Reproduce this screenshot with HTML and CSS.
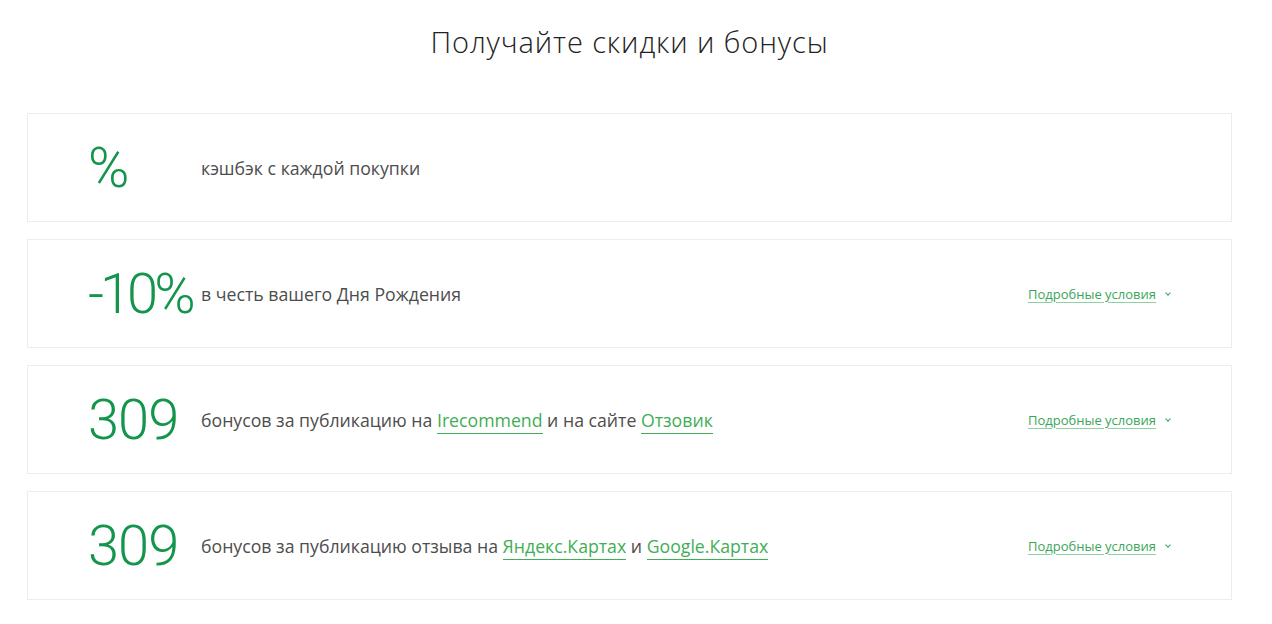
FILE: index.html
```html
<!DOCTYPE html>
<html lang="ru">
<head>
<meta charset="utf-8">
<title>Получайте скидки и бонусы</title>
<link rel="stylesheet" href="styles.css">
</head>
<body>
<section class="bonuses">
  <h1 class="title">Получайте скидки и бонусы</h1>
  <div class="list">
    <div class="card">
      <div class="value">%</div>
      <div class="desc">кэшбэк с каждой покупки</div>
    </div>
    <div class="card">
      <div class="value value-tight">-10%</div>
      <div class="desc">в честь вашего Дня Рождения</div>
      <a class="more" href="#">Подробные условия</a>
    </div>
    <div class="card">
      <div class="value">309</div>
      <div class="desc">бонусов за публикацию на <a class="ref" href="#">Irecommend</a> и на сайте <a class="ref" href="#">Отзовик</a></div>
      <a class="more" href="#">Подробные условия</a>
    </div>
    <div class="card">
      <div class="value">309</div>
      <div class="desc">бонусов за публикацию отзыва на <a class="ref" href="#">Яндекс.Картах</a> и <a class="ref" href="#">Google.Картах</a></div>
      <a class="more" href="#">Подробные условия</a>
    </div>
  </div>
</section>
</body>
</html>
```

FILE: styles.css
```css
html, body {
  margin: 0;
  padding: 0;
  background: #fff;
}
body {
  font-family: "Open Sans", "Liberation Sans", sans-serif;
  color: #444;
}
.bonuses {
  margin: 0 40px 0 27px;
}
.title {
  margin: 0;
  padding-top: 23px;
  height: 113px;
  box-sizing: border-box;
  text-align: center;
  font-weight: 300;
  font-size: 29px;
  line-height: 38px;
  letter-spacing: 0.9px;
  color: #222;
}
.list {
  display: flex;
  flex-direction: column;
  gap: 17px;
}
.card {
  height: 109px;
  box-sizing: border-box;
  border: 1px solid #ededed;
  display: flex;
  align-items: center;
  padding: 0 61px 0 60px;
}
.value {
  width: 113px;
  flex: none;
  font-family: Roboto, "Open Sans", sans-serif;
  font-weight: 300;
  font-size: 56px;
  line-height: 60px;
  color: #14954c;
  letter-spacing: -1px;
  white-space: nowrap;
}
.value-tight {
  letter-spacing: -4px;
}
.desc {
  flex: 1;
  font-size: 17.7px;
  font-weight: 400;
  color: #4d4d4d;
}
.ref {
  color: #3fae55;
  text-decoration: none;
  border-bottom: 1px solid #3fae55;
  padding-bottom: 1px;
}
.more {
  font-size: 13px;
  color: #3aa65a;
  text-decoration: underline;
  text-underline-offset: 3px;
  text-decoration-color: #8fd0a3;
  display: flex;
  align-items: center;
  gap: 10px;
}
.more::after {
  content: "";
  width: 3px;
  height: 3px;
  border-right: 1.2px solid #3aa65a;
  border-bottom: 1.2px solid #3aa65a;
  transform: rotate(45deg);
  margin-top: -2px;
}
```
